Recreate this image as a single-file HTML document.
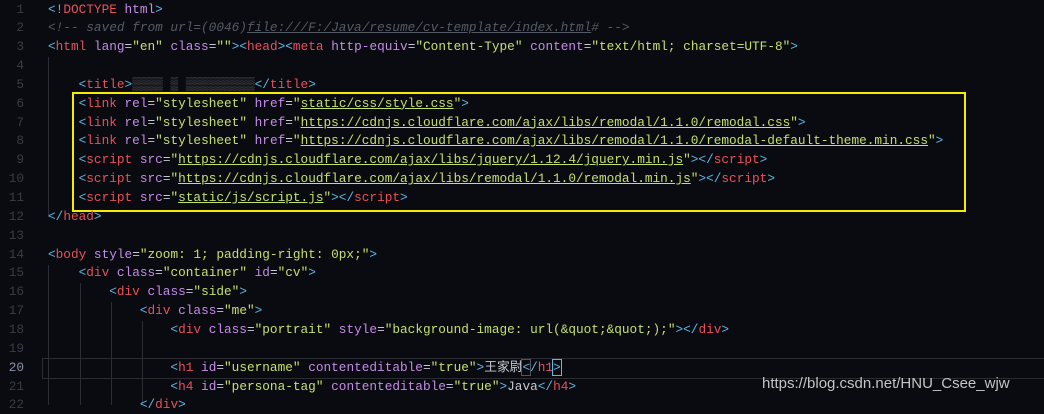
<!DOCTYPE html>
<html><head><meta charset="utf-8"><style>
body{margin:0;width:1044px;height:405px;background:#0a0b10;overflow:hidden;position:relative;font-family:"Liberation Mono","Noto Sans CJK SC",monospace;font-size:12.75px;}
.l{position:absolute;left:48px;height:19px;line-height:19px;white-space:pre;color:#c6cad3}
.n{position:absolute;left:0;width:24px;text-align:right;height:19px;line-height:19px;color:#373c48}
.b{color:#5bb8e6}.t{color:#e8505a}.a{color:#c58be8}.s{color:#c3e06b}.c{color:#555b66;font-style:italic}.e{color:#c6cad3}
.u{text-decoration:underline}
.g{position:absolute;width:1px;background:#2a2d35}
</style></head><body>
<div style="position:absolute;left:42px;top:358px;width:1002px;height:19px;border-top:1px solid #2b2c31;border-bottom:1px solid #2b2c31;border-left:1px solid #2b2c31"></div>
<div class="g" style="left:48px;top:57px;height:160px"></div>
<div class="g" style="left:48px;top:265px;height:140px"></div>
<div class="g" style="left:80px;top:283px;height:122px"></div>
<div class="g" style="left:111px;top:302px;height:103px"></div>
<div class="g" style="left:142px;top:321px;height:84px"></div>
<div style="position:absolute;left:72px;top:92px;width:890px;height:116px;border:2px solid #f5ec00"></div>
<div id="c"></div>
<div style="position:absolute;left:762px;top:375px;font-family:'Liberation Sans',sans-serif;font-size:15px;color:#c4c4c4">https://blog.csdn.net/HNU_Csee_wjw</div>
<script>
var L=[
'<span class="b">&lt;!</span><span class="t">DOCTYPE</span> <span class="a">html</span><span class="b">&gt;</span>',
'<span class="c">&lt;!-- saved from url=(0046)<span class="u">file:///F:/Java/resume/cv-template/index.html</span># --&gt;</span>',
'<span class="b">&lt;</span><span class="t">html</span> <span class="a">lang</span>=<span class="s">"en"</span> <span class="a">class</span>=<span class="s">""</span><span class="b">&gt;&lt;</span><span class="t">head</span><span class="b">&gt;&lt;</span><span class="t">meta</span> <span class="a">http-equiv</span>=<span class="s">"Content-Type"</span> <span class="a">content</span>=<span class="s">"text/html; charset=UTF-8"</span><span class="b">&gt;</span>',
'',
'    <span class="b">&lt;</span><span class="t">title</span><span class="b">&gt;</span><span style="color:#666">▒▒▒▒ ▒ ▒▒▒▒▒▒▒▒▒</span><span class="b">&lt;/</span><span class="t">title</span><span class="b">&gt;</span>',
'    <span class="b">&lt;</span><span class="t">link</span> <span class="a">rel</span>=<span class="s">"stylesheet"</span> <span class="a">href</span>=<span class="s">"<span class="u">static/css/style.css</span>"</span><span class="b">&gt;</span>',
'    <span class="b">&lt;</span><span class="t">link</span> <span class="a">rel</span>=<span class="s">"stylesheet"</span> <span class="a">href</span>=<span class="s">"<span class="u">https://cdnjs.cloudflare.com/ajax/libs/remodal/1.1.0/remodal.css</span>"</span><span class="b">&gt;</span>',
'    <span class="b">&lt;</span><span class="t">link</span> <span class="a">rel</span>=<span class="s">"stylesheet"</span> <span class="a">href</span>=<span class="s">"<span class="u">https://cdnjs.cloudflare.com/ajax/libs/remodal/1.1.0/remodal-default-theme.min.css</span>"</span><span class="b">&gt;</span>',
'    <span class="b">&lt;</span><span class="t">script</span> <span class="a">src</span>=<span class="s">"<span class="u">https://cdnjs.cloudflare.com/ajax/libs/jquery/1.12.4/jquery.min.js</span>"</span><span class="b">&gt;&lt;/</span><span class="t">script</span><span class="b">&gt;</span>',
'    <span class="b">&lt;</span><span class="t">script</span> <span class="a">src</span>=<span class="s">"<span class="u">https://cdnjs.cloudflare.com/ajax/libs/remodal/1.1.0/remodal.min.js</span>"</span><span class="b">&gt;&lt;/</span><span class="t">script</span><span class="b">&gt;</span>',
'    <span class="b">&lt;</span><span class="t">script</span> <span class="a">src</span>=<span class="s">"<span class="u">static/js/script.js</span>"</span><span class="b">&gt;&lt;/</span><span class="t">script</span><span class="b">&gt;</span>',
'<span class="b">&lt;/</span><span class="t">head</span><span class="b">&gt;</span>',
'',
'<span class="b">&lt;</span><span class="t">body</span> <span class="a">style</span>=<span class="s">"zoom: 1; padding-right: 0px;"</span><span class="b">&gt;</span>',
'    <span class="b">&lt;</span><span class="t">div</span> <span class="a">class</span>=<span class="s">"container"</span> <span class="a">id</span>=<span class="s">"cv"</span><span class="b">&gt;</span>',
'        <span class="b">&lt;</span><span class="t">div</span> <span class="a">class</span>=<span class="s">"side"</span><span class="b">&gt;</span>',
'            <span class="b">&lt;</span><span class="t">div</span> <span class="a">class</span>=<span class="s">"me"</span><span class="b">&gt;</span>',
'                <span class="b">&lt;</span><span class="t">div</span> <span class="a">class</span>=<span class="s">"portrait"</span> <span class="a">style</span>=<span class="s">"background-image: url(&amp;quot;&amp;quot;);"</span><span class="b">&gt;&lt;/</span><span class="t">div</span><span class="b">&gt;</span>',
'',
'                <span class="b">&lt;</span><span class="t">h1</span> <span class="a">id</span>=<span class="s">"username"</span> <span class="a">contenteditable</span>=<span class="s">"true"</span><span class="b">&gt;</span>王家尉<span class="b" style="outline:1px solid #555">&lt;</span><span class="b">/</span><span class="t">h1</span><span class="b" style="outline:1px solid #5bb8e6">&gt;</span>',
'                <span class="b">&lt;</span><span class="t">h4</span> <span class="a">id</span>=<span class="s">"persona-tag"</span> <span class="a">contenteditable</span>=<span class="s">"true"</span><span class="b">&gt;</span>Java<span class="b">&lt;/</span><span class="t">h4</span><span class="b">&gt;</span>',
'            <span class="b">&lt;/</span><span class="t">div</span><span class="b">&gt;</span>'
];
var h='';
for(var i=0;i<L.length;i++){var y=(i*18.85)-0.5;
h+='<div class="n" style="top:'+y+'px;'+(i==19?'color:#8a93a8':'')+'">'+(i+1)+'</div>';
h+='<div class="l" style="top:'+y+'px">'+L[i]+'</div>';}
document.getElementById('c').innerHTML=h;
</script>
</body></html>
